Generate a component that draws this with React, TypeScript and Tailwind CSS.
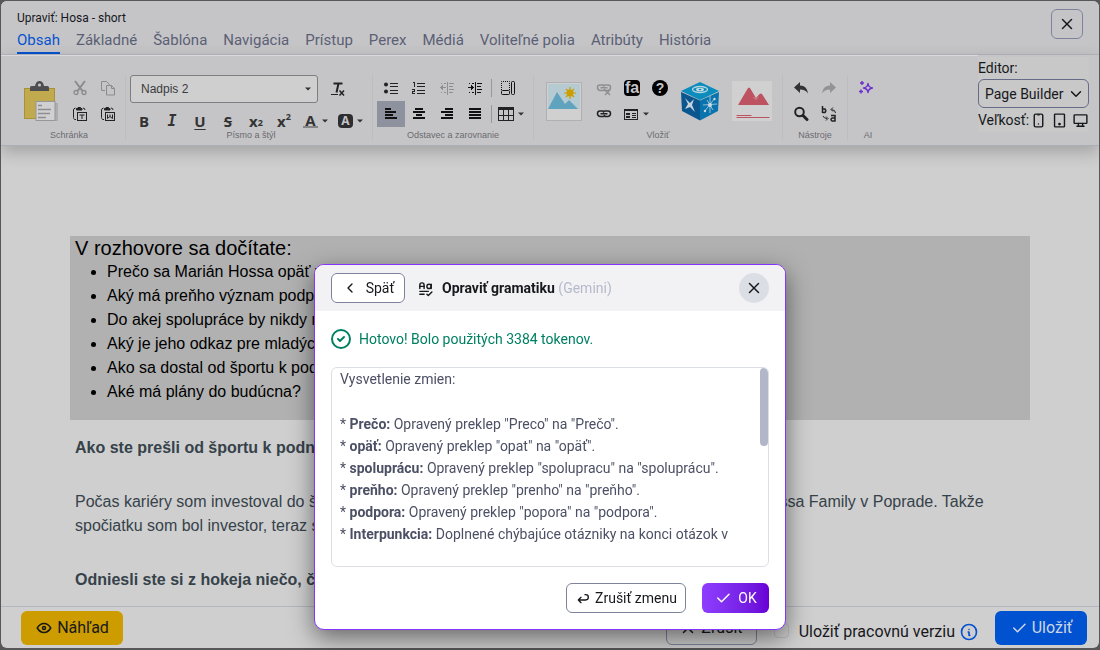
import type { ReactNode } from "react";
import {
  TbArrowBack,
  TbCheck,
  TbChevronDown,
  TbChevronLeft,
  TbCircleCheck,
  TbDeviceDesktop,
  TbDeviceMobile,
  TbDeviceTablet,
  TbEye,
  TbInfoCircle,
  TbTextGrammar,
  TbX,
} from "react-icons/tb";

const tabs = ["Obsah", "Základné", "Šablóna", "Navigácia", "Prístup", "Perex", "Médiá", "Voliteľné polia", "Atribúty", "História"];

const questions = [
  "Prečo sa Marián Hossa opäť vracia?",
  "Aký má preňho význam podpora?",
  "Do akej spolupráce by nikdy nešiel?",
  "Aký je jeho odkaz pre mladých?",
  "Ako sa dostal od športu k podnikaniu?",
  "Aké má plány do budúcna?",
];

const changes: [string, string][] = [
  ["Prečo:", 'Opravený preklep "Preco" na "Prečo".'],
  ["opäť:", 'Opravený preklep "opat" na "opäť".'],
  ["spoluprácu:", 'Opravený preklep "spolupracu" na "spoluprácu".'],
  ["preňho:", 'Opravený preklep "prenho" na "preňho".'],
  ["podpora:", 'Opravený preklep "popora" na "podpora".'],
  ["Interpunkcia:", "Doplnené chýbajúce otázniky na konci otázok v"],
];

function Group({ label, className = "", children }: { label: string; className?: string; children: ReactNode }) {
  return (
    <div className={`flex h-[65px] shrink-0 flex-col border-r border-[#bdbdc1] ${className}`}>
      {children}
      <div className="mt-auto text-center text-[9px] leading-[10px] text-[#6b6b6e]">{label}</div>
    </div>
  );
}

function Tool({ label, className = "h-[26px] w-7", children }: { label: string; className?: string; children: ReactNode }) {
  return (
    <button type="button" aria-label={label} className={`flex shrink-0 items-center justify-center ${className}`}>
      {children}
    </button>
  );
}

function Pix({ children, className = "size-4" }: { children: ReactNode; className?: string }) {
  return (
    <svg viewBox="0 0 16 16" className={className} shapeRendering="crispEdges" fill="#222">
      {children}
    </svg>
  );
}

function Caret() {
  return (
    <svg viewBox="0 0 6 4" className="h-1 w-1.5 shrink-0" fill="#333">
      <path d="M0 0.5h6L3 3.5z" />
    </svg>
  );
}

function AlignIcon({ rows }: { rows: [number, number][] }) {
  return (
    <Pix>
      {rows.map(([x, w], i) => (
        <rect key={i} x={x} y={2 + i * 3} width={w} height="2" fill="#111" />
      ))}
    </Pix>
  );
}

function PasteIcon() {
  return (
    <svg viewBox="0 0 34 40" className="h-10 w-[34px]">
      <rect x="26" y="22" width="8" height="18" fill="#adadb0" />
      <rect x="0.5" y="7.5" width="30" height="30" fill="#c0aa4d" stroke="#a99232" />
      <path d="M6 10V6.500q0-1.500 1.500-1.500H11q1-5 4.500-5T20 5h3.500Q25 5 25 6.500V10z" fill="#4e4e50" />
      <circle cx="15.500" cy="4" r="1.600" fill="#c5c5c9" />
      <rect x="12" y="20.500" width="19" height="19" fill="#d0d0d2" stroke="#97979a" />
      <path d="M14 24.500h4M14 28.500h13M14 32.500h12M14 36.500h8" stroke="#8d8d90" strokeWidth="1.500" />
    </svg>
  );
}

function CutIcon() {
  return (
    <svg viewBox="0 0 16 16" className="size-4" fill="none" stroke="#8b8b8e">
      <path d="M3 1 10.500 11M13 1 5.500 11" strokeWidth="2" />
      <circle cx="4" cy="12.500" r="2" strokeWidth="1.300" />
      <circle cx="12" cy="12.500" r="2" strokeWidth="1.300" />
    </svg>
  );
}

function CopyIcon() {
  return (
    <svg viewBox="0 0 16 16" className="size-4" fill="none" stroke="#8b8b8e">
      <path d="M5 10.500H1.500v-9h5l3 3V5" />
      <path d="M6.500 5.500h5l3 3v6.500h-8zM11.500 5.500v3h3" />
    </svg>
  );
}

function PasteSmall({ letter }: { letter: "T" | "W" }) {
  return (
    <svg viewBox="0 0 16 16" className="size-4" fill="none" stroke="#222">
      <path d="M4 13.500H2.500q-1-1-1-2V4q0-1.500 2-2M11 2q2 0 2 2" />
      <path d="M4.500 2.500V4h5.500V2.500H8.500v-1H6v1z" fill="#222" />
      <rect x="5.500" y="6.500" width="9" height="8" />
      {letter === "T" ? <path d="M7.500 9h5M10 9v4" /> : <path d="M7.500 8.500v4l2.500-2 2.500 2v-4M10 8.500v2" />}
    </svg>
  );
}

function BulletList() {
  return (
    <svg viewBox="0 0 16 16" className="size-4" fill="#222" shapeRendering="crispEdges">
      <circle cx="3" cy="4.500" r="2" shapeRendering="auto" />
      <circle cx="3" cy="11.500" r="2" shapeRendering="auto" />
      <path d="M7 3h8v1H7zM7 6h8v1H7zM7 10h8v1H7zM7 13h8v1H7z" />
    </svg>
  );
}

function NumberList() {
  return (
    <Pix>
      <path d="M2 2h2v5H3V3H2zM1 9h3v3H2v1h2v1H1v-3h2v-1H1z" />
      <path d="M6 3h8v1H6zM6 6h8v1H6zM6 10h8v1H6zM6 13h8v1H6z" />
    </Pix>
  );
}

function IndentIcon({ outdent = false }: { outdent?: boolean }) {
  return (
    <svg viewBox="0 0 16 16" className="size-4" shapeRendering="crispEdges" fill={outdent ? "#8f8f92" : "#111"}>
      <path d="M8 2h1v13H8zM10 3h5v1h-5zM10 6h4v1h-4zM10 9h5v1h-5zM10 12h4v1h-4z" />
      <path d="M2 3h1v1H2zM5 3h2v1H5zM2 12h1v1H2zM5 12h2v1H5z" />
      {outdent ? <path d="M1 7h6v1H1zM2 6h2v3H2zM3 5h1v5H3z" /> : <path d="M1 7h6v1H1zM4 6h2v3H4zM4 5h1v5H4z" />}
    </svg>
  );
}

function TableIcon() {
  return (
    <Pix>
      <path d="M0 1h16v3H0z" />
      <path d="M0 4h1v11H0zM5 4h1v11H5zM10 4h1v11h-1zM15 4h1v11h-1zM0 9h16v1H0zM0 14h16v1H0z" />
    </Pix>
  );
}

function ContainerIcon() {
  return (
    <svg viewBox="0 0 16 16" className="size-4" fill="none" stroke="#111">
      <path d="M1.500 10V1.500h8V10" strokeDasharray="1 1" />
      <rect x="1.500" y="10.500" width="8" height="4" rx="1" />
      <rect x="11.500" y="1.500" width="3" height="13" rx="1" />
    </svg>
  );
}

function PictureIcon() {
  return (
    <svg viewBox="0 0 36 39" className="h-[39px] w-9">
      <rect x="0.500" y="0.500" width="35" height="38" fill="#d0d0d0" stroke="#b0b0b2" />
      <rect x="2" y="2" width="32" height="25" fill="#b6cad1" />
      <path d="M2 27 11 10l8 12 4-4 9 9z" fill="#5fa3be" />
      <path d="M24 5v12M18 11h12M20 7l8 8M28 7l-8 8" stroke="#cc9e00" strokeWidth="1.200" />
      <circle cx="24" cy="11" r="3.500" fill="#cc9e00" />
    </svg>
  );
}

function LinkIcon({ broken = false }: { broken?: boolean }) {
  return (
    <svg viewBox="0 0 16 16" className="size-4" fill="none" stroke={broken ? "#8f8f92" : "#222"} strokeWidth="1.500">
      <path d="M7.500 5H4Q1.500 5 1.500 7.500T4 10.500h3.500L9 9M8.500 10.500H12q2.500-.5 2.500-3T12 5H8.500L7 6.500" />
      <path d="M4.500 7.800h7" />
      {broken && <path d="m9 10 5 5M14 10l-5 5" />}
    </svg>
  );
}

function CubeIcon() {
  return (
    <svg viewBox="0 0 40 40" className="size-10">
      <path d="m20 1 19 9-19 9L1 10z" fill="#0b8cbd" />
      <path d="M1 11l19 8.500V39.500L2 30z" fill="#0c568f" />
      <path d="M39 11l-19 8.500V39.500L38 30z" fill="#0873ad" />
      <ellipse cx="20" cy="8.500" rx="7.500" ry="3" fill="none" stroke="#b9d3de" strokeWidth="1.300" />
      <ellipse cx="20" cy="8.500" rx="4" ry="1.800" fill="#c9dbe3" />
      <ellipse cx="20" cy="8.500" rx="1.500" ry=".7" fill="#0b8cbd" />
      <path d="m5 17 5 5 4-4-2 6 3 7-5-5-5 2 3-5z" fill="#c6d2dc" />
      <path d="m24 31 11-14M27 19l6 10M23 24l14-1M30 15v17" stroke="#b9d0df" strokeWidth=".8" />
      <circle cx="30" cy="24" r="2" fill="#c9dae5" />
      <circle cx="25" cy="30" r="1.200" fill="#c9dae5" />
      <circle cx="34.500" cy="18" r="1.200" fill="#c9dae5" />
    </svg>
  );
}

function BannerIcon() {
  return (
    <svg viewBox="0 0 40 40" className="size-10">
      <rect width="40" height="40" fill="#d0d0d0" />
      <path d="M6 24 16 7q1-1 2 0l6 10 3.500-4q1.500-1 2.500 0l7 11z" fill="#bd5361" />
      <path d="m21.500 16 2.500 2.500 2-2" stroke="#cf8f97" fill="none" />
      <path d="M4.500 34.500h15M4.500 36.500h33" stroke="#bd5361" />
    </svg>
  );
}

function UndoIcon({ className }: { className: string }) {
  return (
    <svg viewBox="0 0 16 16" className={className} fill="currentColor">
      <path d="M7 2v3.500Q14 5.500 15 13.500 12.500 9.500 7 9.500V13L1 7.500z" />
    </svg>
  );
}

function SearchIcon() {
  return (
    <svg viewBox="0 0 16 16" className="size-4" fill="none" stroke="#222">
      <circle cx="6.500" cy="6" r="4.300" strokeWidth="2" />
      <path d="m10 9.500 4 4" strokeWidth="3" strokeLinecap="round" />
    </svg>
  );
}

function ReplaceIcon() {
  return (
    <svg viewBox="0 0 16 16" className="size-4" fill="none" stroke="#222">
      <path d="M1.500 0v7M1.500 3H4q1.500 2 0 3.500H1.500M10 9.500h4V15.500M14.500 12H11q-2 1.500 0 3h3.500" strokeWidth="1.500" />
      <path d="M2 10q1 2.500 4 2.500M5 10.500l2 2-2 2M14.500 7q0-3-4-3.500M12 1.500l-2 2 2 2" />
    </svg>
  );
}

function SparkIcon() {
  return (
    <svg viewBox="0 0 16 16" className="size-4" fill="none" stroke="#6b2fd0" strokeWidth="1.400" strokeLinejoin="round">
      <path d="M10 3.500q.5 4 4.500 4.500-4 .5-4.500 4.500Q9.500 8.500 5.500 8 9.500 7.500 10 3.500z" />
      <path d="M4 1v4M2 3h4M3 9.500v4M1 11.500h4" />
    </svg>
  );
}

export default function App() {
  return (
    <div className="relative flex h-screen flex-col bg-[#57575a] px-px pt-px pb-0.5 font-['Roboto','Liberation_Sans',sans-serif] text-[#17181c]">
      <div className="flex min-h-0 flex-1 flex-col overflow-hidden rounded-md bg-[#cfcfcf]">
        <header className="relative flex flex-col border-b border-[#b4b7bd] bg-[#c5c5c8] pl-4">
          <h1 className="mt-2 mb-px text-xs leading-[18px]">Upraviť: Hosa - short</h1>
          <nav className="flex gap-4 text-[15px] leading-6 text-[#5b6074]">
            {tabs.map((tab, i) => (
              <a
                key={tab}
                href="#"
                className={i === 0 ? "border-b-2 border-[#0553cf] text-[#0553cf]" : "border-b-2 border-transparent"}
              >
                {tab}
              </a>
            ))}
          </nav>
          <button
            type="button"
            aria-label="Zavrieť"
            className="absolute top-2 right-4 flex h-[30px] w-8 items-center justify-center rounded-md border border-[#7e839c]"
          >
            <TbX className="size-[18px]" />
          </button>
        </header>

        <div className="relative z-10 flex items-start border-b border-[#aab0b8] bg-[#c5c5c8] pr-2.5 pb-[5px] shadow-[0_6px_16px_rgba(0,0,0,0.22)]">
          <div className="flex flex-1 border-t border-[#dadadd] pt-[19px] pl-3 font-['Liberation_Sans',sans-serif]">
            <Group label="Schránka" className="w-[113px]">
              <div className="flex h-[52px] items-center pl-[11px]">
                <Tool label="Vložiť" className="mr-2 h-10 w-[34px]">
                  <PasteIcon />
                </Tool>
                <div className="grid grid-cols-2">
                  <Tool label="Vystrihnúť"><CutIcon /></Tool>
                  <Tool label="Kopírovať"><CopyIcon /></Tool>
                  <Tool label="Vložiť ako text"><PasteSmall letter="T" /></Tool>
                  <Tool label="Vložiť z Wordu"><PasteSmall letter="W" /></Tool>
                </div>
              </div>
            </Group>

            <Group label="Písmo a štýl" className="w-[247px] pl-1">
              <div className="flex items-center gap-1.5">
                <button
                  type="button"
                  className="flex h-7 w-[188px] items-center justify-between rounded-[3px] border border-[#7e7e81] bg-[#cfcfcf] pr-1.5 pl-2.5 text-xs text-[#3a3a3c]"
                >
                  Nadpis 2
                  <Caret />
                </button>
                <Tool label="Odstrániť formátovanie">
                  <svg viewBox="0 0 16 16" className="size-4" fill="none" stroke="#222">
                    <path d="M3.500 2.500h9M8.500 2.500l-2 9" strokeWidth="2" />
                    <path d="M1 13.500h7" />
                    <path d="m9.500 9.500 4.500 5M14 9.500l-4.500 5" strokeWidth="1.500" />
                  </svg>
                </Tool>
              </div>
              <div className="mt-[11px] flex h-3.5 items-center font-['Open_Sans',sans-serif] text-[15px] leading-[14px] font-bold text-[#333]">
                <Tool label="Tučné" className="h-3.5 w-7">B</Tool>
                <Tool label="Kurzíva" className="h-3.5 w-7 font-['DejaVu_Sans_Mono',monospace] italic">I</Tool>
                <Tool label="Podčiarknuté" className="h-3.5 w-7 underline underline-offset-2">U</Tool>
                <Tool label="Prečiarknuté" className="h-3.5 w-7 line-through">S</Tool>
                <Tool label="Dolný index" className="h-3.5 w-7">x<sub className="text-[9px]">2</sub></Tool>
                <Tool label="Horný index" className="h-3.5 w-7">x<sup className="text-[9px]">2</sup></Tool>
                <Tool label="Farba textu" className="h-3.5 w-[35px] gap-1">
                  <span className="border-b-2 border-[#858588] px-0.5 leading-3">A</span>
                  <Caret />
                </Tool>
                <Tool label="Farba pozadia" className="h-3.5 w-[35px] gap-1">
                  <span className="rounded-sm bg-[#2e2e30] px-[3px] text-xs leading-[14px] text-[#c5c5c8]">A</span>
                  <Caret />
                </Tool>
              </div>
            </Group>

            <Group label="Odstavec a zarovnanie" className="w-[161px]">
              <div className="flex h-[52px] pl-1">
                <div className="grid grid-cols-4">
                  <Tool label="Odrážky"><BulletList /></Tool>
                  <Tool label="Číslovanie"><NumberList /></Tool>
                  <Tool label="Zmenšiť odsadenie"><IndentIcon outdent /></Tool>
                  <Tool label="Zväčšiť odsadenie"><IndentIcon /></Tool>
                  <Tool label="Zarovnať vľavo" className="h-[26px] w-7 bg-[#8e929e]">
                    <AlignIcon rows={[[2, 6], [2, 11], [2, 8], [2, 12]]} />
                  </Tool>
                  <Tool label="Zarovnať na stred">
                    <AlignIcon rows={[[4, 8], [2, 12], [5, 6], [2, 12]]} />
                  </Tool>
                  <Tool label="Zarovnať vpravo">
                    <AlignIcon rows={[[6, 8], [2, 12], [6, 8], [2, 12]]} />
                  </Tool>
                  <Tool label="Do bloku">
                    <AlignIcon rows={[[2, 12], [2, 12], [2, 12], [2, 12]]} />
                  </Tool>
                </div>
                <div className="flex flex-col pl-0.5">
                  <span className="my-1 h-[18px] border-l border-[#98989b]" />
                  <span className="my-1 h-[18px] border-l border-[#98989b]" />
                </div>
                <div className="flex flex-col items-start pl-0.5">
                  <Tool label="Kontajner"><ContainerIcon /></Tool>
                  <Tool label="Tabuľka" className="h-[26px] gap-1 pl-1"><TableIcon /><Caret /></Tool>
                </div>
              </div>
            </Group>

            <Group label="Vložiť" className="w-[249px]">
              <div className="flex h-[52px] items-center pl-3">
                <Tool label="Obrázok" className="mr-2 h-10 w-9"><PictureIcon /></Tool>
                <div className="flex flex-col">
                  <div className="flex">
                    <Tool label="Zrušiť odkaz"><LinkIcon broken /></Tool>
                    <Tool label="Font Awesome">
                      <span className="h-4 w-4 rounded bg-black text-center text-base leading-[15px] font-bold text-[#c5c5c8]">fa</span>
                    </Tool>
                    <Tool label="Pomoc">
                      <span className="h-4 w-4 rounded-full bg-black text-center text-sm leading-4 font-bold text-[#c5c5c8]">?</span>
                    </Tool>
                  </div>
                  <div className="flex">
                    <Tool label="Odkaz"><LinkIcon /></Tool>
                    <Tool label="Formulár" className="h-[26px] w-9 gap-1">
                      <Pix>
                        <path d="M1 3h14v2H1zM1 5h1v9H1zM14 5h1v9h-1zM1 13h14v1H1zM3 7h4v2H3zM3 10h4v2H3zM9 7h4v1H9zM9 9h4v1H9zM9 11h4v1H9z" />
                      </Pix>
                      <Caret />
                    </Tool>
                  </div>
                </div>
                <Tool label="Aplikácie" className="ml-1.5 size-10"><CubeIcon /></Tool>
                <Tool label="Banner" className="ml-3 size-10"><BannerIcon /></Tool>
              </div>
            </Group>

            <Group label="Nástroje" className="w-[65px]">
              <div className="grid grid-cols-2 px-1">
                <Tool label="Späť"><UndoIcon className="size-4 text-[#333]" /></Tool>
                <Tool label="Znova"><UndoIcon className="size-4 -scale-x-100 text-[#939396]" /></Tool>
                <Tool label="Hľadať"><SearchIcon /></Tool>
                <Tool label="Nahradiť"><ReplaceIcon /></Tool>
              </div>
            </Group>

            <Group label="AI" className="w-10 border-r-0">
              <Tool label="AI asistent" className="ml-1 h-[26px] w-7"><SparkIcon /></Tool>
            </Group>
          </div>

          <div className="mt-0.5 w-[111px] bg-[#c8c8c8] text-sm">
            <label htmlFor="editor" className="block leading-[22px]">Editor:</label>
            <div className="relative">
              <select
                id="editor"
                className="block h-[29px] w-full appearance-none rounded-md border border-[#666c88] bg-[#c8c8c8] pl-1.5 text-sm"
              >
                <option>Page Builder</option>
              </select>
              <TbChevronDown className="pointer-events-none absolute top-1.5 right-1 size-[18px]" />
            </div>
            <div className="flex items-center justify-between leading-6">
              Veľkosť:
              <span className="flex gap-1">
                <button type="button" aria-label="Mobil"><TbDeviceMobile className="size-[17px]" /></button>
                <button type="button" aria-label="Tablet"><TbDeviceTablet className="size-[17px]" /></button>
                <button type="button" aria-label="Počítač"><TbDeviceDesktop className="size-[17px]" /></button>
              </span>
            </div>
          </div>
        </div>

        <main className="min-h-0 flex-1 overflow-hidden px-[69px] pt-[90px] font-['Liberation_Sans',sans-serif] text-base leading-6 text-[#36424a]">
          <section className="bg-[#b1b1b1] px-[5px] pb-4 text-black">
            <h2 className="text-xl leading-6">V rozhovore sa dočítate:</h2>
            <ul className="list-disc pl-8">
              {questions.map((q) => (
                <li key={q}>{q}</li>
              ))}
            </ul>
          </section>
          <div className="flex flex-col gap-[30px] px-[5px] pt-4">
            <p className="font-bold">Ako ste prešli od športu k podnikaniu?</p>
            <p>
              Počas kariéry som investoval do športového centra v Trenčíne a neskôr aj do moderného hotela Hossa Family v
              Poprade. Takže spočiatku som bol investor, teraz sa podnikaniu venujem naplno.
            </p>
            <p className="font-bold">Odniesli ste si z hokeja niečo, čo vám pomáha?</p>
          </div>
        </main>

        <footer className="flex items-start border-t border-[#b2b6be] pt-1 pr-3 pb-[3px] pl-5 text-base">
          <button type="button" className="flex h-[34px] w-[102px] items-center justify-center gap-1 rounded-md bg-[#cc9c00]">
            <TbEye className="size-[18px]" />
            Náhľad
          </button>
          <div className="ml-auto flex items-center">
            <button
              type="button"
              className="mr-[17px] flex h-[34px] w-[91px] items-center justify-center gap-1 rounded-md border border-[#7e839c]"
            >
              <TbX className="size-[18px]" />
              Zrušiť
            </button>
            <input
              id="draft"
              type="checkbox"
              className="mt-1 mr-2.5 size-[15px] appearance-none rounded-sm border border-[#b9bbc0]"
            />
            <label htmlFor="draft" className="mt-2">Uložiť pracovnú verziu</label>
            <TbInfoCircle className="mt-2 ml-1 size-5 text-[#0553cf]" />
          </div>
          <button
            type="button"
            className="ml-4 flex h-[34px] w-[92px] items-center justify-center gap-1 rounded-md bg-[#0052d1] text-[#cfd6e4]"
          >
            <TbCheck className="size-[18px]" />
            Uložiť
          </button>
        </footer>
      </div>

      <div className="fixed inset-0 z-20 flex items-start justify-center pt-[264px]">
        <div
          role="dialog"
          aria-labelledby="dialog-title"
          className="w-[472px] overflow-hidden rounded-[10px] border border-[#8533ff] bg-white text-sm shadow-[0_8px_24px_rgba(0,0,0,0.5)]"
        >
          <div className="flex items-center bg-[#f2f2f5] px-4 py-2">
            <button
              type="button"
              className="flex h-[30px] w-[74px] items-center justify-center gap-2 rounded-md border border-[#7e839c] bg-white"
            >
              <TbChevronLeft className="size-4" />
              Späť
            </button>
            <TbTextGrammar className="ml-3 size-[17px]" />
            <h2 id="dialog-title" className="ml-2 font-bold">
              Opraviť gramatiku <span className="font-normal text-[#b5bacb]">(Gemini)</span>
            </h2>
            <button
              type="button"
              aria-label="Zavrieť okno"
              className="ml-auto flex size-[30px] items-center justify-center rounded-full bg-[#dcdee6]"
            >
              <TbX className="size-[18px]" />
            </button>
          </div>
          <div className="p-4">
            <p className="flex items-center gap-1.5 leading-6 text-[#008062]">
              <TbCircleCheck className="-ml-0.5 size-6" />
              Hotovo! Bolo použitých 3384 tokenov.
            </p>
            <div className="relative mt-4 h-[200px] overflow-hidden rounded-md border border-[#dcdee6] px-2 leading-[22px] text-[#4c5065]">
              <p>Vysvetlenie zmien:</p>
              <ul className="mt-[23px]">
                {changes.map(([word, text]) => (
                  <li key={word}>
                    * <b>{word}</b> {text}
                  </li>
                ))}
              </ul>
              <span className="absolute top-0 right-0 h-[78px] w-2 rounded-full bg-[#b1b6c9]" />
            </div>
            <div className="mt-4 flex justify-end gap-4">
              <button
                type="button"
                className="flex h-[30px] w-[120px] items-center justify-center gap-1 rounded-md border border-[#7e839c]"
              >
                <TbArrowBack className="size-4" />
                Zrušiť zmenu
              </button>
              <button
                type="button"
                className="flex h-[30px] w-[67px] items-center justify-center gap-1.5 rounded-md bg-linear-to-r from-[#8e3dff] to-[#6900d6] text-white"
              >
                <TbCheck className="size-[18px]" />
                OK
              </button>
            </div>
          </div>
        </div>
      </div>
    </div>
  );
}
